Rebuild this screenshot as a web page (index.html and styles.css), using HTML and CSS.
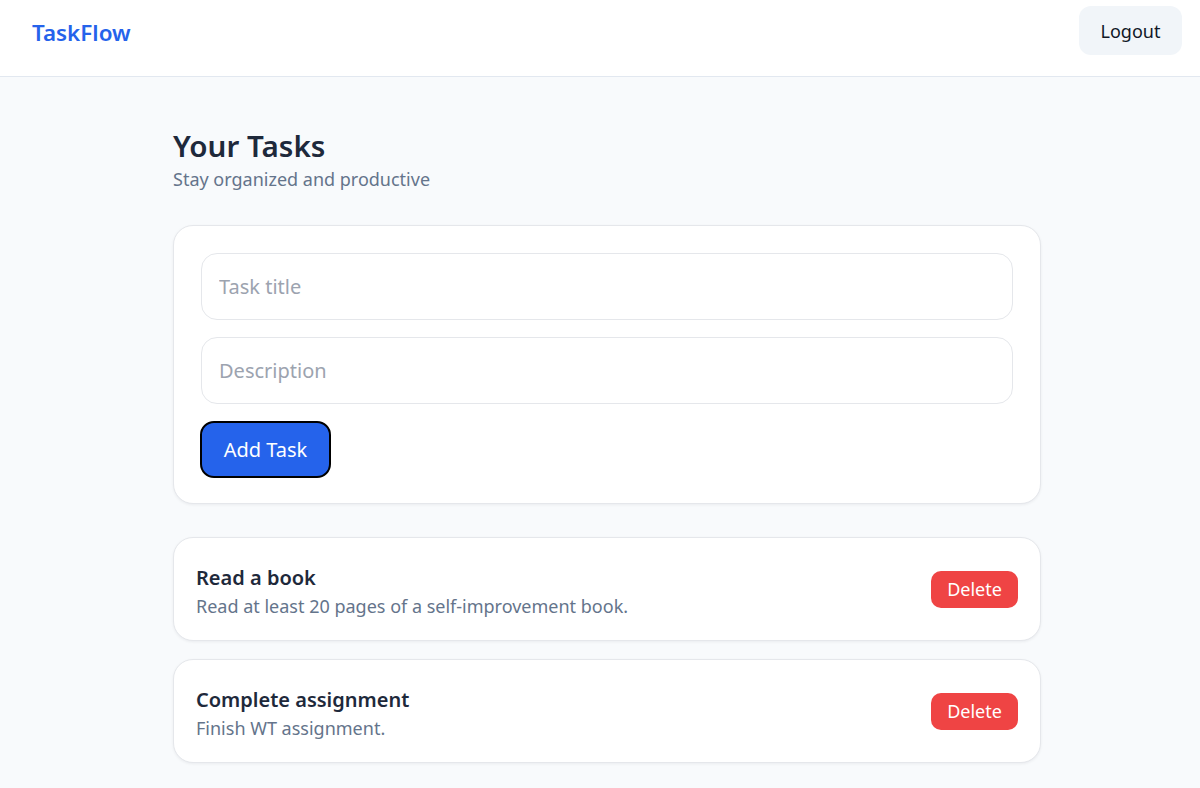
FILE: index.html
```html
<!DOCTYPE html>
<html lang="en">
<head>
<meta charset="utf-8">
<title>TaskFlow</title>
<link rel="stylesheet" href="styles.css">
</head>
<body>
<header class="topbar">
  <div class="logo">TaskFlow</div>
  <button class="logout">Logout</button>
</header>
<main class="container">
  <h1 class="title">Your Tasks</h1>
  <p class="subtitle">Stay organized and productive</p>
  <form class="form-card">
    <input class="field" type="text" placeholder="Task title">
    <input class="field" type="text" placeholder="Description">
    <div><button type="button" class="add-btn">Add Task</button></div>
  </form>
  <ul class="task-list">
    <li class="task">
      <div class="task-text">
        <div class="task-title">Read a book</div>
        <div class="task-desc">Read at least 20 pages of a self-improvement book.</div>
      </div>
      <button class="delete">Delete</button>
    </li>
    <li class="task">
      <div class="task-text">
        <div class="task-title">Complete assignment</div>
        <div class="task-desc">Finish WT assignment.</div>
      </div>
      <button class="delete">Delete</button>
    </li>
  </ul>
</main>
</body>
</html>
```
FILE: styles.css
```css
* { box-sizing: border-box; }
html, body { margin: 0; padding: 0; }
body {
  background: #f8fafc;
  font-family: "Noto Sans", "Open Sans", sans-serif;
  color: #1e293b;
  min-height: 788px;
}
.topbar {
  background: #ffffff;
  border-bottom: 1px solid #e2e8f0;
  height: 77px;
  display: flex;
  justify-content: space-between;
  align-items: flex-start;
  padding: 6px 18px 0 32px;
}
.logo {
  color: #2563eb;
  font-size: 22.4px;
  font-weight: 600;
  line-height: 53px;
}
.logout {
  font-family: inherit;
  background: #f1f5f9;
  border: none;
  border-radius: 12px;
  width: 103px;
  height: 49px;
  font-size: 18px;
  color: #111827;
}
.container {
  width: 868px;
  margin-left: 173px;
  padding-top: 48px;
}
.title {
  margin: 0;
  font-size: 29.6px;
  font-weight: 600;
  line-height: 41px;
  color: #1e293b;
}
.subtitle {
  margin: 0;
  padding-top: 1px;
  font-size: 18px;
  line-height: 24px;
  color: #64748b;
}
.form-card {
  margin-top: 34px;
  background: #ffffff;
  border: 1px solid #e5e7eb;
  border-radius: 20px;
  box-shadow: 0 1px 3px rgba(15, 23, 42, 0.06);
  padding: 27px 27px 25px 27px;
  display: flex;
  flex-direction: column;
  gap: 17px;
}
.field {
  width: 100%;
  height: 67px;
  border: 1px solid #e5e7eb;
  border-radius: 16px;
  padding: 0 17px;
  font-family: inherit;
  font-size: 20px;
  color: #1e293b;
  background: #ffffff;
  outline: none;
}
.field::placeholder { color: #9ca3af; }
.add-btn {
  font-family: inherit;
  background: #2563eb;
  color: #ffffff;
  border: 2px solid #000000;
  border-radius: 14px;
  width: 131px;
  height: 57px;
  font-size: 20px;
  margin-left: -1px;
}
.task-list {
  list-style: none;
  margin: 33px 0 0 0;
  padding: 0;
  display: flex;
  flex-direction: column;
  gap: 18px;
}
.task {
  background: #ffffff;
  border: 1px solid #e5e7eb;
  border-radius: 20px;
  box-shadow: 0 1px 3px rgba(15, 23, 42, 0.06);
  height: 104px;
  padding: 0 22px;
  display: flex;
  align-items: center;
  justify-content: space-between;
}
.task-text { padding-top: 4px; }
.task-title {
  font-size: 20px;
  font-weight: 600;
  line-height: 28px;
  color: #1e293b;
}
.task-desc {
  margin-top: 1px;
  font-size: 18px;
  line-height: 26px;
  color: #64748b;
}
.delete {
  font-family: inherit;
  background: #ef4444;
  color: #ffffff;
  border: none;
  border-radius: 10px;
  width: 87px;
  height: 37px;
  font-size: 18px;
}
```
